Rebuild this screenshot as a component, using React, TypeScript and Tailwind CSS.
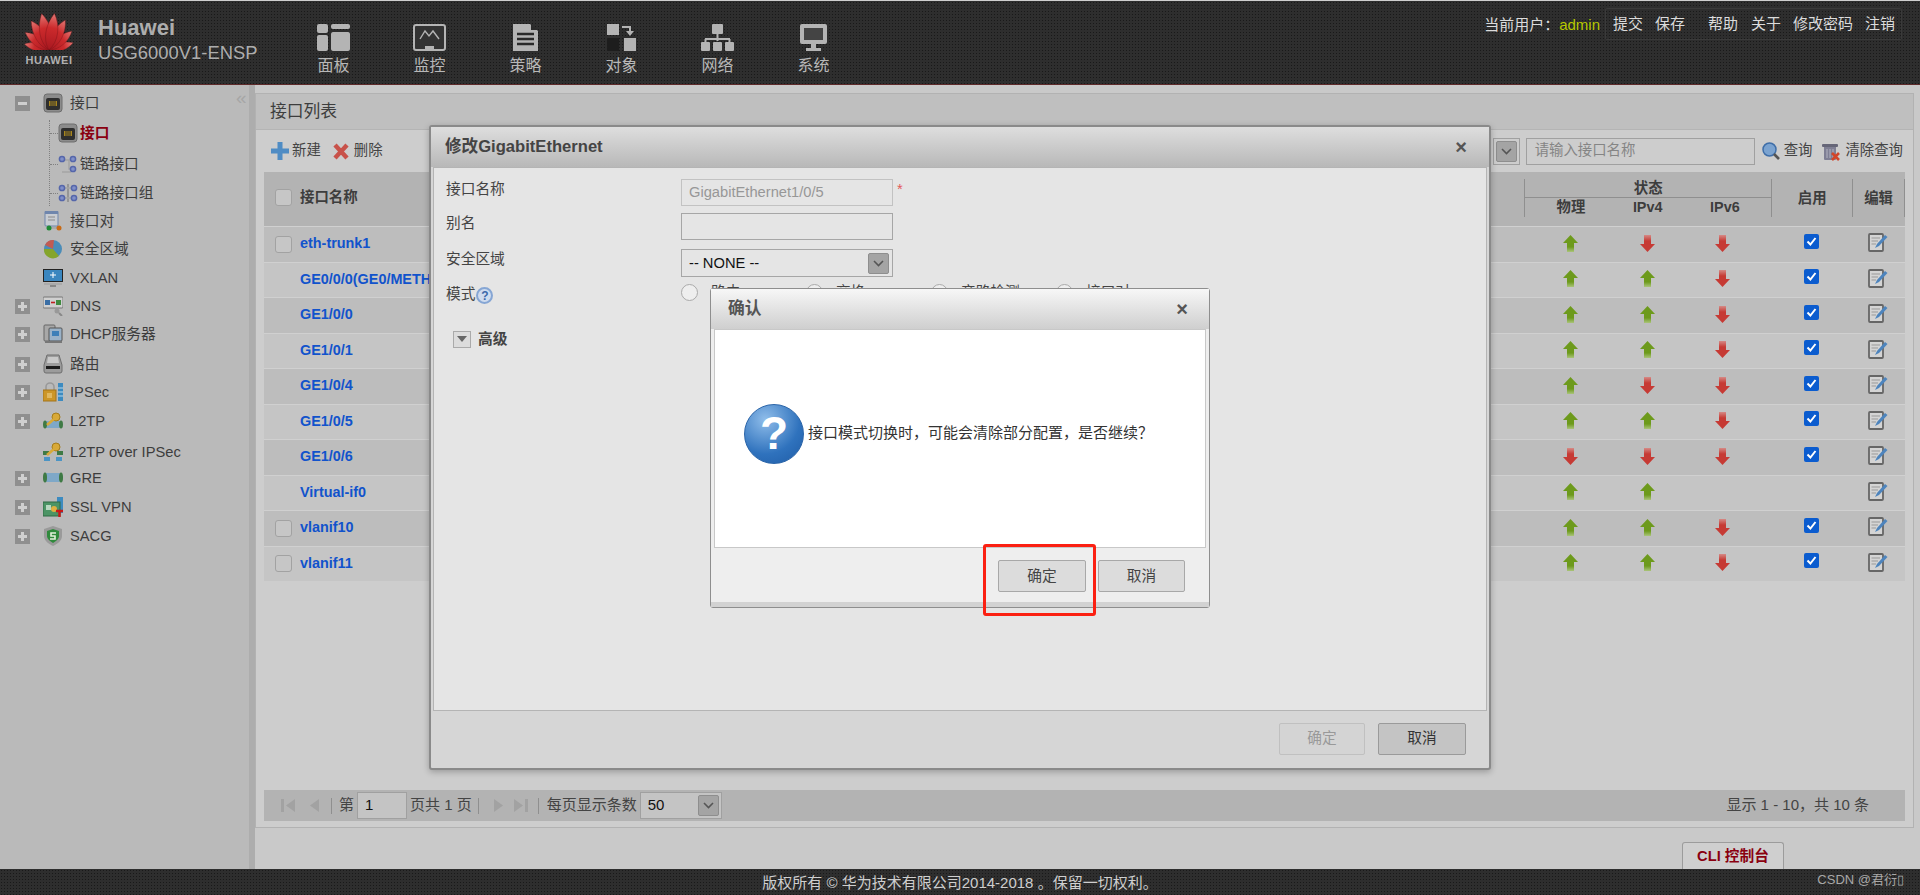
import type { ReactNode } from "react";

type Status = "up" | "down" | "none";

type PortRow = {
  name: string;
  check: boolean;
  status: Status[];
  enabled: boolean;
};

const navItems = [
  { label: "面板", icon: "panel" },
  { label: "监控", icon: "monitor" },
  { label: "策略", icon: "policy" },
  { label: "对象", icon: "object" },
  { label: "网络", icon: "network" },
  { label: "系统", icon: "system" },
];

const ports: PortRow[] = [
  { name: "eth-trunk1", check: true, status: ["up", "down", "down"], enabled: true },
  { name: "GE0/0/0(GE0/METH", check: false, status: ["up", "up", "down"], enabled: true },
  { name: "GE1/0/0", check: false, status: ["up", "up", "down"], enabled: true },
  { name: "GE1/0/1", check: false, status: ["up", "up", "down"], enabled: true },
  { name: "GE1/0/4", check: false, status: ["up", "down", "down"], enabled: true },
  { name: "GE1/0/5", check: false, status: ["up", "up", "down"], enabled: true },
  { name: "GE1/0/6", check: false, status: ["down", "down", "down"], enabled: true },
  { name: "Virtual-if0", check: false, status: ["up", "up", "none"], enabled: false },
  { name: "vlanif10", check: true, status: ["up", "up", "down"], enabled: true },
  { name: "vlanif11", check: true, status: ["up", "up", "down"], enabled: true },
];

function NavIcon({ name }: { name: string }) {
  const c = "#b4b4b4";
  return (
    <svg width="33" height="27" viewBox="0 0 33 27" className="block">
      {name === "panel" && (
        <g fill={c}>
          <rect x="0" y="0" width="11" height="9" rx="2" />
          <rect x="0" y="11" width="11" height="16" rx="2" />
          <rect x="14" y="0" width="19" height="5" rx="2" />
          <rect x="14" y="8" width="19" height="19" rx="2" />
        </g>
      )}
      {name === "monitor" && (
        <g>
          <rect x="1" y="1" width="31" height="25" rx="2" fill="#333" stroke={c} strokeWidth="2" />
          <path d="M7 15 L12 7 L16 12 L20 7 L26 15" fill="none" stroke={c} strokeWidth="1.4" />
          <rect x="12" y="22" width="9" height="4" fill={c} />
        </g>
      )}
      {name === "policy" && (
        <g>
          <path d="M4 0 H21 L29 7 V27 H4 Z" fill={c} />
          <path d="M22 0 L29 6 H22 Z" fill="#2a2a2a" />
          <path d="M8 10 H25 M8 15 H25 M8 20 H25" stroke="#2a2a2a" strokeWidth="2.4" />
        </g>
      )}
      {name === "object" && (
        <g>
          <rect x="2" y="0" width="12" height="11" fill={c} />
          <rect x="2" y="14" width="12" height="13" fill="#1d1d1d" />
          <rect x="19" y="14" width="12" height="13" fill={c} />
          <path d="M17 2 H26 V7 H29 L25 12 L21 7 H24 V4 H17 Z" fill={c} />
        </g>
      )}
      {name === "network" && (
        <g fill={c}>
          <rect x="11" y="0" width="11" height="10" rx="1" />
          <rect x="15.5" y="10" width="2" height="7" />
          <rect x="4" y="14" width="25" height="2" />
          <rect x="0" y="18" width="9" height="9" rx="1" />
          <rect x="12" y="18" width="9" height="9" rx="1" />
          <rect x="24" y="18" width="9" height="9" rx="1" />
          <rect x="3.5" y="15" width="2" height="4" />
          <rect x="27.5" y="15" width="2" height="4" />
        </g>
      )}
      {name === "system" && (
        <g>
          <rect x="3" y="0" width="27" height="20" rx="2" fill={c} />
          <rect x="7" y="4" width="19" height="12" fill="#444" />
          <rect x="14" y="20" width="5" height="4" fill={c} />
          <rect x="9" y="24" width="15" height="3" fill={c} />
        </g>
      )}
    </svg>
  );
}

function HuaweiLogo() {
  const petals = [
    { a: -75, s: 0.68 },
    { a: 75, s: 0.68 },
    { a: -52, s: 0.8 },
    { a: 52, s: 0.8 },
    { a: -30, s: 0.92 },
    { a: 30, s: 0.92 },
    { a: -10, s: 1 },
    { a: 10, s: 1 },
  ];
  return (
    <svg width="50" height="38" viewBox="0 0 50 38" className="block">
      <defs>
        <linearGradient id="hw" x1="0" y1="0" x2="0" y2="1">
          <stop offset="0" stopColor="#e27a76" />
          <stop offset="0.4" stopColor="#cc2a2c" />
          <stop offset="1" stopColor="#a81820" />
        </linearGradient>
      </defs>
      {petals.map((p) => (
        <path
          key={p.a}
          d="M0 0 C-8 -9 -8 -24 -1 -37 C7 -26 8 -10 0 0 Z"
          fill="url(#hw)"
          stroke="#7a1418"
          strokeWidth="0.4"
          transform={`translate(25 38) rotate(${p.a}) scale(${p.s})`}
        />
      ))}
    </svg>
  );
}

function TreeIcon({ name }: { name: string }) {
  return (
    <svg width="20" height="20" viewBox="0 0 20 20" className="block shrink-0">
      {name === "port" && (
        <g>
          <rect x="1" y="1" width="18" height="18" rx="3" fill="#8c8c8c" stroke="#6e6e6e" />
          <rect x="3" y="5" width="14" height="12" rx="2" fill="#2e2e2e" />
          <rect x="6" y="8" width="8" height="5" fill="#a8861e" />
          <path d="M8 8 V13 M10 8 V13 M12 8 V13" stroke="#2e2e2e" />
        </g>
      )}
      {name === "link" && (
        <g fill="#8190c8" stroke="#5566aa" strokeWidth="1.5">
          <path d="M6 6 H11 V15 H15 M4 18 H13" fill="none" stroke="#a5a5a5" />
          <circle cx="4" cy="5" r="2.6" />
          <circle cx="15" cy="5" r="2.6" />
          <circle cx="15" cy="15" r="2.6" />
        </g>
      )}
      {name === "group" && (
        <g fill="#8190c8" stroke="#5566aa" strokeWidth="1.5">
          <path d="M10 1 V19" stroke="#8a8a8a" fill="none" />
          <path d="M5 5 H15 M5 15 H15" stroke="#a5a5a5" fill="none" />
          <circle cx="4" cy="5" r="2.6" />
          <circle cx="16" cy="5" r="2.6" />
          <circle cx="4" cy="15" r="2.6" />
          <circle cx="16" cy="15" r="2.6" />
        </g>
      )}
      {name === "pair" && (
        <g>
          <rect x="2" y="0" width="13" height="15" rx="1" fill="#c8ccd2" stroke="#6f86ad" />
          <rect x="2" y="0" width="13" height="3" fill="#6f86ad" />
          <path d="M5 6 H12 M5 9 H12" stroke="#8a8a8a" />
          <path d="M6 17 H16" stroke="#999" />
          <circle cx="6" cy="17" r="2.5" fill="#1f8a35" />
          <circle cx="16" cy="17" r="2.5" fill="#c96a14" />
        </g>
      )}
      {name === "zone" && (
        <g>
          <circle cx="10" cy="10" r="9" fill="#4a8cb8" />
          <path d="M10 10 L2 6 A9 9 0 0 1 11 1 Z" fill="#c25b52" />
          <path d="M10 10 L1 10 A9 9 0 0 0 16 17 Z" fill="#85a52b" />
        </g>
      )}
      {name === "vxlan" && (
        <g>
          <rect x="0" y="1" width="20" height="13" fill="#222" />
          <rect x="1" y="2" width="18" height="11" fill="#3a86bf" />
          <path d="M10 4 V10 M7 7 H13" stroke="#fff" />
          <rect x="1" y="15" width="18" height="2" fill="#aaa" />
          <rect x="7" y="17" width="6" height="2" fill="#888" />
        </g>
      )}
      {name === "dns" && (
        <g>
          <rect x="0" y="1" width="20" height="11" rx="1" fill="#d0d0d0" stroke="#777" />
          <rect x="2" y="4" width="5" height="5" fill="#3a6ea5" />
          <rect x="13" y="4" width="5" height="5" fill="#3f8a3f" />
          <path d="M8 6.5 H12" stroke="#c02020" strokeWidth="1.6" />
          <circle cx="14" cy="15" r="2.5" fill="#999" />
          <path d="M16 17 L19 20" stroke="#888" strokeWidth="2" />
        </g>
      )}
      {name === "dhcp" && (
        <g>
          <rect x="1" y="1" width="11" height="16" rx="1" fill="#a8a8a8" stroke="#666" />
          <rect x="6" y="4" width="13" height="13" rx="1" fill="#9ab2c8" stroke="#555" />
          <rect x="9" y="7" width="7" height="5" fill="#3d7fb8" />
          <rect x="2" y="17" width="17" height="2" fill="#777" />
        </g>
      )}
      {name === "route" && (
        <g>
          <path d="M4 1 H16 L19 11 V17 A2 2 0 0 1 17 19 H3 A2 2 0 0 1 1 17 V11 Z" fill="#9c9c9c" stroke="#6e6e6e" />
          <path d="M5 3 H15 L16 9 H4 Z" fill="#c9c9c9" />
          <rect x="3" y="12" width="14" height="3" fill="#1c1c1c" />
        </g>
      )}
      {name === "ipsec" && (
        <g>
          <path d="M3 9 V5 A4 4 0 0 1 11 5 V9" fill="none" stroke="#999" strokeWidth="1.6" />
          <rect x="0" y="8" width="13" height="11" fill="#cc9628" stroke="#a3741a" />
          <rect x="4" y="11" width="5" height="5" fill="#e0b860" />
          <rect x="15" y="1" width="5" height="18" fill="#3d8bc0" />
          <path d="M15 6 H20 M15 10 H20 M15 14 H20" stroke="#bcd8ea" />
        </g>
      )}
      {name === "l2tp" && (
        <g>
          <rect x="2" y="10" width="16" height="7" rx="2" fill="#7fa8c8" />
          <ellipse cx="2" cy="13.5" rx="2" ry="4" fill="#3f7a45" />
          <ellipse cx="18" cy="13.5" rx="2" ry="4" fill="#3f7a45" />
          <circle cx="13" cy="6" r="4" fill="#d8a938" stroke="#a67c1a" />
          <path d="M11 8 L4 14" stroke="#d8a938" strokeWidth="2.6" />
        </g>
      )}
      {name === "l2tpIpsec" && (
        <g>
          <rect x="0" y="9" width="6" height="4" fill="#3f7a45" />
          <rect x="14" y="9" width="6" height="4" fill="#3f7a45" />
          <rect x="1" y="15" width="6" height="4" fill="#4b94c4" />
          <rect x="13" y="15" width="6" height="4" fill="#4b94c4" />
          <circle cx="13" cy="5" r="4" fill="#d8a938" stroke="#a67c1a" />
          <path d="M11 7 L4 13" stroke="#d8a938" strokeWidth="2.6" />
        </g>
      )}
      {name === "gre" && (
        <g>
          <rect x="2" y="5" width="16" height="9" rx="2" fill="#7fa8c8" />
          <ellipse cx="2" cy="9.5" rx="2" ry="5" fill="#3f7a45" />
          <ellipse cx="18" cy="9.5" rx="2" ry="5" fill="#3f7a45" />
        </g>
      )}
      {name === "ssl" && (
        <g>
          <rect x="14" y="0" width="6" height="16" fill="#3d8bc0" />
          <rect x="0" y="5" width="17" height="14" fill="#4c9465" stroke="#2f6b44" />
          <rect x="3" y="8" width="5" height="5" fill="#b8d8c0" />
          <circle cx="11" cy="12" r="3" fill="#e0b040" />
          <path d="M13 14 H20 M16.5 14 V20" stroke="#c81818" strokeWidth="2.4" />
        </g>
      )}
      {name === "sacg" && (
        <g>
          <path d="M10 0 L19 3 V10 C19 15 14 18 10 20 C6 18 1 15 1 10 V3 Z" fill="#9a9a9a" />
          <path d="M10 3 L16 5 V10 C16 13 13 15 10 17 C7 15 4 13 4 10 V5 Z" fill="#2f8a3c" />
          <path d="M13 7 H8 V10 H12 V13 H7" fill="none" stroke="#e4f0dc" strokeWidth="1.6" />
        </g>
      )}
    </svg>
  );
}

function Toggle({ open }: { open?: boolean }) {
  return (
    <span className="relative block h-[15px] w-[15px] shrink-0 bg-[#8f8f8f]">
      <span className="absolute top-[6px] left-[3px] h-[3px] w-[9px] bg-[#cfcfcf]" />
      {!open && <span className="absolute top-[3px] left-[6px] h-[9px] w-[3px] bg-[#cfcfcf]" />}
    </span>
  );
}

function TreeRow({
  icon,
  label,
  toggle,
  open,
  className,
}: {
  icon: string;
  label: string;
  toggle?: boolean;
  open?: boolean;
  className: string;
}) {
  return (
    <div className={`flex h-[26px] items-center pl-[15px] ${className}`}>
      {toggle ? <Toggle open={open} /> : <span className="w-[15px] shrink-0" />}
      <span className="ml-[13px]">
        <TreeIcon name={icon} />
      </span>
      <span className="ml-[7px] whitespace-nowrap">{label}</span>
    </div>
  );
}

function TreeChild({
  icon,
  label,
  active,
  className,
}: {
  icon: string;
  label: string;
  active?: boolean;
  className: string;
}) {
  return (
    <div className={`flex h-[26px] items-center ${className}`}>
      <span className="w-[8px] border-t border-dotted border-[#808080]" />
      <TreeIcon name={icon} />
      <span className={active ? "ml-[2px] font-bold text-[#8a0010]" : "ml-[2px]"}>{label}</span>
    </div>
  );
}

function Sidebar() {
  return (
    <aside className="relative h-full w-[255px] shrink-0 border-r-[6px] border-[#adadad] bg-[#bababa] pt-[5px] text-[14.7px] text-[#3d3d3d]">
      <span className="absolute top-[3px] left-[236px] text-[19px] leading-[20px] text-[#a6a6a6]">«</span>
      <TreeRow icon="port" label="接口" toggle open className="mt-0" />
      <div className="ml-[49px] mb-[2px] border-l border-dotted border-[#808080]">
        <TreeChild icon="port" label="接口" active className="mt-[4px]" />
        <TreeChild icon="link" label="链路接口" className="mt-[5px]" />
        <TreeChild icon="group" label="链路接口组" className="mt-[3px]" />
      </div>
      <TreeRow icon="pair" label="接口对" className="mt-0" />
      <TreeRow icon="zone" label="安全区域" className="mt-[2px]" />
      <TreeRow icon="vxlan" label="VXLAN" className="mt-[3px]" />
      <TreeRow icon="dns" label="DNS" toggle className="mt-[2px]" />
      <TreeRow icon="dhcp" label="DHCP服务器" toggle className="mt-[2px]" />
      <TreeRow icon="route" label="路由" toggle className="mt-[4px]" />
      <TreeRow icon="ipsec" label="IPSec" toggle className="mt-[2px]" />
      <TreeRow icon="l2tp" label="L2TP" toggle className="mt-[3px]" />
      <TreeRow icon="l2tpIpsec" label="L2TP over IPSec" className="mt-[5px]" />
      <TreeRow icon="gre" label="GRE" toggle className="mt-0" />
      <TreeRow icon="ssl" label="SSL VPN" toggle className="mt-[3px]" />
      <TreeRow icon="sacg" label="SACG" toggle className="mt-[3px]" />
    </aside>
  );
}

function Arrow({ dir }: { dir: Status }) {
  if (dir === "none") return null;
  const up = dir === "up";
  return (
    <svg width="15" height="17" viewBox="0 0 15 17" className="block">
      <defs>
        <linearGradient id="arrowUp" x1="0" y1="0" x2="0" y2="1">
          <stop offset="0" stopColor="#6d9a1c" />
          <stop offset="0.7" stopColor="#6d9a1c" />
          <stop offset="1" stopColor="#aac47a" />
        </linearGradient>
        <linearGradient id="arrowDown" x1="0" y1="0" x2="0" y2="1">
          <stop offset="0" stopColor="#d58a86" />
          <stop offset="0.35" stopColor="#c63a34" />
          <stop offset="1" stopColor="#c63a34" />
        </linearGradient>
      </defs>
      {up ? (
        <path d="M7.5 0 L15 8 H11 V17 H4 V8 H0 Z" fill="url(#arrowUp)" />
      ) : (
        <path d="M7.5 17 L15 9 H11 V0 H4 V9 H0 Z" fill="url(#arrowDown)" />
      )}
    </svg>
  );
}

function CheckedBox() {
  return (
    <span className="flex h-[15px] w-[15px] items-center justify-center rounded-[2px] bg-[#0b5ccf]">
      <svg width="11" height="11" viewBox="0 0 11 11">
        <path d="M1.5 5.5 L4.4 8.5 L9.5 2" fill="none" stroke="#fff" strokeWidth="2" />
      </svg>
    </span>
  );
}

function EmptyBox() {
  return <span className="block h-[17px] w-[17px] rounded-[3px] border border-[#a2a2a2] bg-[#c6c6c6]" />;
}

function EditIcon() {
  return (
    <svg width="20" height="19" viewBox="0 0 20 19" className="block">
      <rect x="1" y="1" width="14" height="17" rx="1" fill="#d4d4d4" stroke="#666" strokeWidth="1.8" />
      <path d="M3.5 5 H12 M3.5 8 H10 M3.5 11 H8" stroke="#999" />
      <path d="M7 15 L9 11 L17 2 L19.5 4 L11 13 Z" fill="#4d84bd" />
    </svg>
  );
}

function Chevron() {
  return (
    <span className="flex h-[21px] w-[21px] items-center justify-center rounded-[2px] border border-[#8e8e8e] bg-[#a4a4a4]">
      <svg width="11" height="7" viewBox="0 0 11 7">
        <path d="M1 1 L5.5 5.5 L10 1" fill="none" stroke="#555" strokeWidth="1.6" />
      </svg>
    </span>
  );
}

function Divider() {
  return <span className="block h-[16px] w-px bg-[#8f8f8f]" />;
}

function PagerArrow({ d }: { d: string }) {
  return (
    <svg width="15" height="15" viewBox="0 0 15 15" className="block">
      <path d={d} fill="#a2a2a2" />
    </svg>
  );
}

function PortTable() {
  return (
    <div className="mx-[8px] text-[14.4px] text-[#3d3d3d]">
      <div className="flex h-[54px] items-center bg-[#b3b3b3] pb-[2px] font-bold">
        <div className="flex w-[1262px] items-center pl-[11px]">
          <EmptyBox />
          <span className="ml-[8px]">接口名称</span>
        </div>
        <div className="h-[38px] w-[248px] border-x border-[#8f8f8f]">
          <div className="h-[19px] border-b border-[#8f8f8f] text-center leading-[19px]">状态</div>
          <div className="flex h-[19px] leading-[19px]">
            <span className="w-[92px] text-center">物理</span>
            <span className="w-[62px] text-center">IPv4</span>
            <span className="w-[93px] text-center">IPv6</span>
          </div>
        </div>
        <div className="h-[38px] w-[81px] border-r border-[#8f8f8f] text-center leading-[38px]">启用</div>
        <div className="h-[38px] w-[52px] border-r border-[#8f8f8f] text-center leading-[38px]">编辑</div>
      </div>
      {ports.map((port, i) => (
        <div
          key={port.name}
          className={`flex h-[35.5px] items-center border-t border-[#d0d0d0] ${
            i % 2 === 0 ? "bg-[#bdbdbd]" : "bg-[#c5c5c5]"
          }`}
        >
          <div className="flex w-[1263px] items-center pl-[11px]">
            <span className="w-[25px]">{port.check && <EmptyBox />}</span>
            <span className="font-bold text-[#1153cc]">{port.name}</span>
          </div>
          <div className="flex w-[92px] justify-center pr-[2px] pb-[2px]">
            <Arrow dir={port.status[0]} />
          </div>
          <div className="flex w-[62px] justify-center pr-[2px] pb-[2px]">
            <Arrow dir={port.status[1]} />
          </div>
          <div className="flex w-[93px] justify-center pr-[6px] pb-[2px]">
            <Arrow dir={port.status[2]} />
          </div>
          <div className="flex w-[81px] justify-center pr-[2px] pb-[6px]">{port.enabled && <CheckedBox />}</div>
          <div className="flex w-[52px] justify-center pr-[2px] pb-[3px]">
            <EditIcon />
          </div>
        </div>
      ))}
    </div>
  );
}

function Toolbar() {
  return (
    <div className="flex h-[42px] items-center pl-[15px] text-[14.4px] text-[#444]">
      <svg width="18" height="18" viewBox="0 0 18 18" className="block">
        <path d="M6.5 0 H11.5 V6.5 H18 V11.5 H11.5 V18 H6.5 V11.5 H0 V6.5 H6.5 Z" fill="#4f8cc4" />
      </svg>
      <span className="ml-[3px]">新建</span>
      <svg width="16" height="17" viewBox="0 0 16 17" className="ml-[12px] block">
        <path d="M2 2 L14 15 M14 2 L2 15" stroke="#c8524a" strokeWidth="4.4" />
      </svg>
      <span className="ml-[5px]">删除</span>
      <div className="ml-auto flex items-center pr-[10px]">
        <span className="mr-[6px] flex h-[27px] items-center border border-[#a0a0a0] pr-[2px] pl-[2px]">
          <Chevron />
        </span>
        <span className="flex h-[27px] w-[229px] items-center border border-[#a0a0a0] pl-[8px] text-[#858585]">
          请输入接口名称
        </span>
        <svg width="18" height="18" viewBox="0 0 18 18" className="ml-[7px] block">
          <circle cx="7.5" cy="7.5" r="6.5" fill="#7ba3d0" stroke="#3f6ea8" strokeWidth="1.5" />
          <path d="M12 12 L17 17" stroke="#555" strokeWidth="2.6" />
        </svg>
        <span className="ml-[4px]">查询</span>
        <svg width="18" height="19" viewBox="0 0 18 19" className="ml-[10px] block">
          <rect x="2" y="4" width="12" height="14" rx="1" fill="#7f7f94" />
          <rect x="0" y="2" width="16" height="3" rx="1" fill="#666678" />
          <path d="M5 7 V16 M8 7 V16 M11 7 V16" stroke="#b5b5c2" />
          <path d="M10 11 L17 18 M17 11 L10 18" stroke="#d2452a" strokeWidth="2.6" />
        </svg>
        <span className="ml-[5px]">清除查询</span>
      </div>
    </div>
  );
}

function Pager() {
  return (
    <div className="mx-[8px] mt-auto mb-[6px] flex h-[31px] items-center bg-[#b3b3b3] pl-[17px] text-[15px] text-[#444]">
      <PagerArrow d="M0 1 H3 V14 H0 Z M14 1 V14 L5 7.5 Z" />
      <span className="ml-[12px]">
        <PagerArrow d="M11 1 V14 L2 7.5 Z" />
      </span>
      <span className="mr-[7px] ml-[8px]">
        <Divider />
      </span>
      <span>第</span>
      <span className="mx-[3px] flex h-[27px] w-[50px] items-center border border-[#a0a0a0] bg-[#c4c4c4] pl-[7px] text-[#111]">
        1
      </span>
      <span className="whitespace-nowrap">页共 1 页</span>
      <span className="mx-[6px]">
        <Divider />
      </span>
      <span className="ml-[6px]">
        <PagerArrow d="M3 1 V14 L12 7.5 Z" />
      </span>
      <span className="ml-[7px]">
        <PagerArrow d="M1 1 V14 L10 7.5 Z M12 1 H15 V14 H12 Z" />
      </span>
      <span className="mr-[8px] ml-[10px]">
        <Divider />
      </span>
      <span className="whitespace-nowrap">每页显示条数</span>
      <span className="ml-[3px] flex h-[27px] w-[82px] items-center justify-between border border-[#a0a0a0] bg-[#c4c4c4] pr-[2px] pl-[7px] text-[#111]">
        50
        <Chevron />
      </span>
      <span className="mr-[36px] ml-auto whitespace-nowrap">显示 1 - 10，共 10 条</span>
    </div>
  );
}

function FormRow({ label, help, children, className }: { label: string; help?: boolean; children: ReactNode; className: string }) {
  return (
    <div className={`flex ${className}`}>
      <div className="-mt-[3px] flex h-[27px] w-[235px] items-center">
        {label}
        {help && (
          <span className="mt-[2px] ml-[1px] flex h-[17px] w-[17px] items-center justify-center rounded-full border-2 border-[#86a6d4] bg-[#cfdcef] text-[12px] font-bold text-[#3c69aa]">
            ?
          </span>
        )}
      </div>
      {children}
    </div>
  );
}

function Radio({ label }: { label: string }) {
  return (
    <span className="flex w-[125px] items-center">
      <span className="h-[17px] w-[17px] rounded-full border border-[#aaa] bg-[#eee]" />
      <span className="ml-[13px]">{label}</span>
    </span>
  );
}

function EditDialog() {
  return (
    <div className="absolute top-[125px] left-[429px] flex h-[645px] w-[1062px] flex-col rounded-[3px] border-2 border-[#8a8a8a] bg-[#d6d6d6] text-[14.7px] text-[#444] shadow-[0_2px_6px_rgba(0,0,0,0.25)]">
      <div className="flex h-[40px] shrink-0 items-center justify-between bg-gradient-to-b from-[#dedede] to-[#b8b8b8] pr-[22px] pl-[14px]">
        <span className="text-[16.6px] font-bold text-[#444]">修改GigabitEthernet</span>
        <span className="text-[20px] leading-none font-bold text-[#555]">×</span>
      </div>
      <div className="mx-[2px] h-[544px] shrink-0 border border-[#b4b4b4] bg-[#e5e5e5] pt-[11px] pl-[12px]">
        <FormRow label="接口名称" className="h-[27px]">
          <span className="flex h-[27px] w-[212px] items-center border border-[#c2c2c2] pl-[7px] text-[#979797]">
            GigabitEthernet1/0/5
          </span>
          <span className="ml-[4px] -mt-[1px] text-[#e35a5a]">*</span>
        </FormRow>
        <FormRow label="别名" className="mt-[7px] h-[27px]">
          <span className="h-[27px] w-[212px] border border-[#a6a6a6]" />
        </FormRow>
        <FormRow label="安全区域" className="mt-[9px] h-[28px]">
          <span className="flex h-[28px] w-[212px] items-center justify-between border border-[#a6a6a6] pr-[3px] pl-[7px] text-[#111]">
            -- NONE --
            <Chevron />
          </span>
        </FormRow>
        <FormRow label="模式" help className="mt-[7px] h-[27px]">
          <div className="flex h-[17px]">
            <Radio label="路由" />
            <Radio label="交换" />
            <Radio label="旁路检测" />
            <Radio label="接口对" />
          </div>
        </FormRow>
        <div className="mt-[17px] ml-[7px] flex items-center font-bold">
          <span className="flex h-[17px] w-[18px] items-center justify-center border border-[#aaa] bg-[#dcdcdc]">
            <svg width="10" height="6" viewBox="0 0 10 6">
              <path d="M0 0 H10 L5 6 Z" fill="#666" />
            </svg>
          </span>
          <span className="ml-[7px]">高级</span>
        </div>
      </div>
      <div className="flex flex-1 items-center justify-end gap-[13px] pr-[23px] pb-[2px]">
        <span className="flex h-[32px] w-[86px] items-center justify-center rounded-[2px] border border-[#c0c0c0] bg-[#d4d4d4] text-[#999]">
          确定
        </span>
        <span className="flex h-[32px] w-[88px] items-center justify-center rounded-[2px] border border-[#9a9a9a] bg-[#c4c4c4] text-[#333]">
          取消
        </span>
      </div>
    </div>
  );
}

function ConfirmDialog() {
  return (
    <div className="absolute top-[288px] left-[710px] flex h-[320px] w-[500px] flex-col rounded-[3px] border-[1.5px] border-[#8e8e8e] bg-[#eeeeee] text-[#444]">
      <div className="flex h-[40px] shrink-0 items-center justify-between bg-gradient-to-b from-[#f7f7f7] to-[#cfcfcf] pr-[21px] pl-[17px]">
        <span className="text-[16.8px] font-bold text-[#555]">确认</span>
        <span className="text-[20px] leading-none font-bold text-[#555]">×</span>
      </div>
      <div className="mx-[3px] flex h-[219px] shrink-0 items-center border border-[#c8c8c8] bg-white pb-[10px] pl-[29px]">
        <span className="flex h-[60px] w-[60px] items-center justify-center rounded-full border border-[#2a64a8] bg-[radial-gradient(circle_at_35%_25%,#8fbdea,#2f72bd_60%,#1f5ca6)] text-[46px] font-bold text-white">
          ?
        </span>
        <span className="ml-[4px] whitespace-nowrap text-[15px] text-[#333]">
          接口模式切换时，可能会清除部分配置，是否继续？
        </span>
      </div>
      <div className="flex flex-1 items-start justify-end gap-[12px] pt-[12px] pr-[24px] text-[14.7px]">
        <span className="flex h-[32px] w-[88px] items-center justify-center rounded-[2px] border border-[#a8a8a8] bg-[#dcdcdc]">
          确定
        </span>
        <span className="flex h-[32px] w-[87px] items-center justify-center rounded-[2px] border border-[#a8a8a8] bg-[#dcdcdc]">
          取消
        </span>
      </div>
      <div className="h-[5px] shrink-0 bg-[#d2d2d2]" />
    </div>
  );
}

export default function App() {
  return (
    <div className="relative flex h-[895px] w-[1920px] flex-col overflow-hidden bg-[#c9c9c9] font-['Liberation_Sans','Noto_Sans_CJK_SC',sans-serif]">
      <header className="flex h-[85px] shrink-0 border-t border-b border-t-[#cfcfcf] border-b-[#5e2a2a] bg-[#2e2e2e] bg-[radial-gradient(circle,#191919_1px,transparent_1px)] bg-[length:3px_3px]">
        <div className="flex w-[98px] shrink-0 flex-col items-center pt-[11px]">
          <HuaweiLogo />
          <span className="mt-[2px] text-[11px] font-bold tracking-[0.5px] text-[#b0b0b0]">HUAWEI</span>
        </div>
        <div className="w-[219px] shrink-0 pt-[14px] text-[#adadad]">
          <div className="text-[22px] leading-[25px] font-bold">Huawei</div>
          <div className="text-[18.4px] leading-[25px]">USG6000V1-ENSP</div>
        </div>
        {navItems.map((item) => (
          <div key={item.label} className="flex w-[96px] shrink-0 flex-col pt-[23px] text-[#b8b8b8]">
            <NavIcon name={item.icon} />
            <span className="mt-[6px] w-[33px] text-center text-[16px] leading-[18px] whitespace-nowrap">{item.label}</span>
          </div>
        ))}
        <div className="ml-auto flex items-start pt-[7px] pr-[18px] text-[15px] text-[#dcdcdc]">
          <span className="leading-[34px]">当前用户：</span>
          <span className="leading-[34px] text-[#b6c800]">admin</span>
          <div className="ml-[5px] flex h-[32px] w-[297px] items-center rounded-[2px] border border-[#3a3a3a] pl-[7px]">
            <span>提交</span>
            <span className="ml-[12px]">保存</span>
            <span className="ml-[23px]">帮助</span>
            <span className="ml-[13px]">关于</span>
            <span className="ml-[12px]">修改密码</span>
            <span className="ml-[12px]">注销</span>
          </div>
        </div>
      </header>

      <div className="flex h-[784px] shrink-0">
        <Sidebar />
        <main className="flex min-w-0 flex-1 flex-col">
          <section className="mt-[8px] mr-[6px] flex h-[735px] flex-col border border-[#b2b2b2] bg-[#cdcdcd]">
            <div className="flex h-[36px] shrink-0 items-center border-b border-[#b4b4b4] bg-[#bfbfbf] pl-[14px] text-[16.8px] text-[#3d3d3d]">
              接口列表
            </div>
            <Toolbar />
            <PortTable />
            <Pager />
          </section>
          <div className="flex flex-1 items-end justify-end pr-[136px]">
            <span className="flex h-[27px] w-[102px] items-center justify-center rounded-t-[3px] border border-b-0 border-[#9c9c9c] bg-[#cfcfcf] text-[14.7px] font-bold whitespace-nowrap text-[#8a0010]">
              CLI 控制台
            </span>
          </div>
        </main>
      </div>

      <footer className="relative flex h-[26px] shrink-0 items-center justify-center bg-[#2e2e2e] bg-[radial-gradient(circle,#191919_1px,transparent_1px)] bg-[length:3px_3px] pt-[3px] text-[15px] text-[#cfcfcf]">
        版权所有 © 华为技术有限公司2014-2018 。保留一切权利。
        <span className="absolute top-[1px] right-[16px] text-[13px] text-[#a8a8a8]">CSDN @君衍▯</span>
      </footer>

      <EditDialog />
      <ConfirmDialog />
      <div className="absolute top-[544px] left-[983px] h-[72px] w-[113px] rounded-[3px] border-[3px] border-[#fb2012]" />
    </div>
  );
}
